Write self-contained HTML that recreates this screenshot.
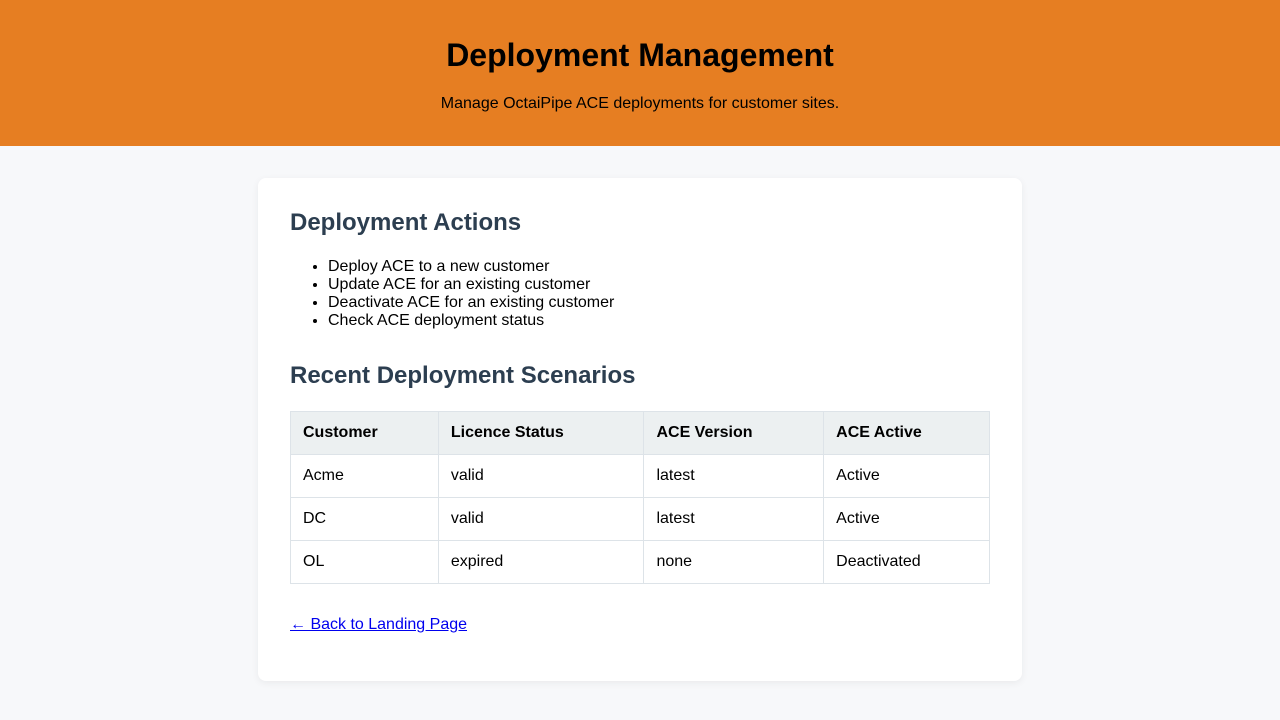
<!DOCTYPE html>
<html><head><meta charset="utf-8"><style>
*{box-sizing:border-box}
body{margin:0;background:#f7f8fa;font-family:"Liberation Sans",Arial,sans-serif;color:#000;width:1280px;height:720px;overflow:hidden}
header{background:#e67e22;height:146px;text-align:center;padding-top:37px}
header h1{margin:0;font-size:32px;line-height:37px;font-weight:bold}
header p{margin:21px 0 0;font-size:16px;line-height:18px}
.card{position:absolute;left:258px;top:178px;width:764px;height:503px;background:#fff;border-radius:8px;box-shadow:0 2px 8px rgba(0,0,0,0.06);padding:32px}
h2{color:#2c3e50;font-size:24px;line-height:28px;margin:0;font-weight:bold;position:relative;top:-1px}
ul{margin:20px 0 0;padding-left:38px;font-size:16px;line-height:18px}
h2.second{margin-top:33px}
table{margin-top:20px;border-collapse:collapse;width:700px;font-size:16px}
th,td{border:1px solid #dde3e8;text-align:left;padding:0 12px;height:43px}
th{background:#ecf0f1;font-weight:bold}
a{display:block;margin-top:32px;color:#0000ee;font-size:16px;line-height:18px}
</style></head><body>
<header><h1>Deployment Management</h1><p>Manage OctaiPipe ACE deployments for customer sites.</p></header>
<div class="card">
<h2>Deployment Actions</h2>
<ul><li>Deploy ACE to a new customer</li><li>Update ACE for an existing customer</li><li>Deactivate ACE for an existing customer</li><li>Check ACE deployment status</li></ul>
<h2 class="second">Recent Deployment Scenarios</h2>
<table>
<colgroup><col style="width:148px"><col style="width:206px"><col style="width:180px"><col style="width:166px"></colgroup>
<tr><th>Customer</th><th>Licence Status</th><th>ACE Version</th><th>ACE Active</th></tr>
<tr><td>Acme</td><td>valid</td><td>latest</td><td>Active</td></tr>
<tr><td>DC</td><td>valid</td><td>latest</td><td>Active</td></tr>
<tr><td>OL</td><td>expired</td><td>none</td><td>Deactivated</td></tr>
</table>
<a href="#">← Back to Landing Page</a>
</div>
</body></html>
